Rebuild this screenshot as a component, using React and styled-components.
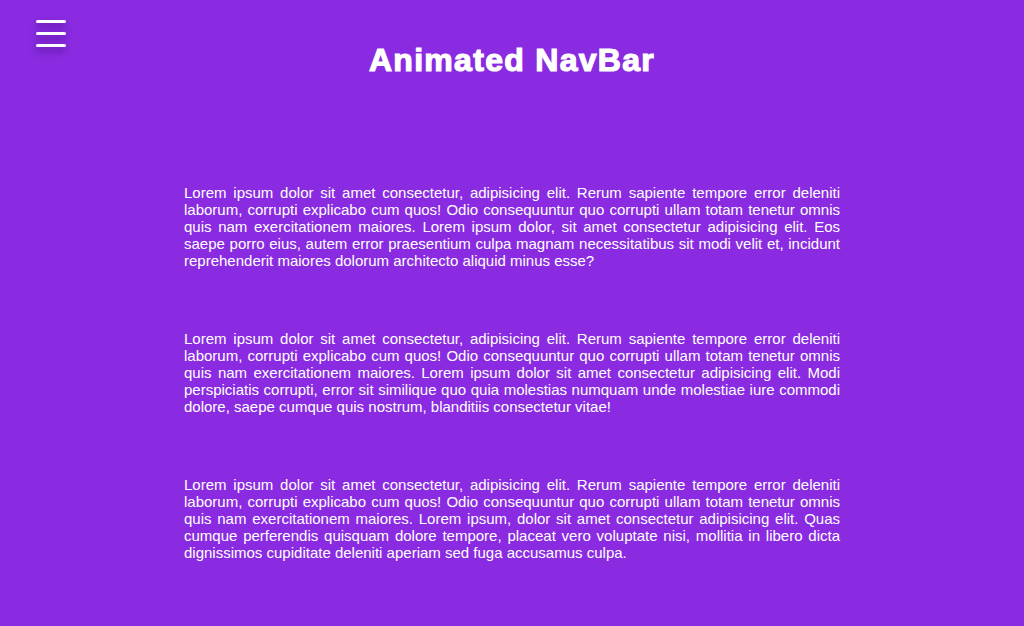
import styled, { createGlobalStyle } from "styled-components";

const GlobalStyle = createGlobalStyle`
  html, body {
    margin: 0;
    padding: 0;
    background: #8a2be2;
  }
  body {
    font-family: "Liberation Sans", Arial, sans-serif;
    color: #fff;
    min-height: 626px;
  }
`;

const Page = styled.div`
  position: relative;
  min-height: 626px;
`;

// menu toggle sits over the page, top-left
const Burger = styled.button`
  position: absolute;
  top: 20px;
  left: 36px;
  width: 30px;
  display: flex;
  flex-direction: column;
  gap: 9px;
  padding: 0;
  background: none;
  border: none;
  cursor: pointer;
`;

const Bar = styled.span`
  display: block;
  width: 30px;
  height: 3px;
  border-radius: 3px;
  background: #fff;
  box-shadow: 0 4px 7px rgba(50, 0, 100, 0.6);
`;

const Title = styled.h1`
  margin: 0;
  padding-top: 42px;
  text-align: center;
  font-size: 32px;
  font-weight: 700;
  letter-spacing: 1.3px;
  -webkit-text-stroke: 1.2px #fff;
`;

const Content = styled.main`
  width: 656px;
  margin: 0 auto;
  padding-top: 105px;
  display: flex;
  flex-direction: column;
  gap: 61px;
`;

const Para = styled.p`
  margin: 0;
  font-size: 15px;
  text-align: justify;
`;

const paragraphs = [
  "Lorem ipsum dolor sit amet consectetur, adipisicing elit. Rerum sapiente tempore error deleniti laborum, corrupti explicabo cum quos! Odio consequuntur quo corrupti ullam totam tenetur omnis quis nam exercitationem maiores. Lorem ipsum dolor, sit amet consectetur adipisicing elit. Eos saepe porro eius, autem error praesentium culpa magnam necessitatibus sit modi velit et, incidunt reprehenderit maiores dolorum architecto aliquid minus esse?",
  "Lorem ipsum dolor sit amet consectetur, adipisicing elit. Rerum sapiente tempore error deleniti laborum, corrupti explicabo cum quos! Odio consequuntur quo corrupti ullam totam tenetur omnis quis nam exercitationem maiores. Lorem ipsum dolor sit amet consectetur adipisicing elit. Modi perspiciatis corrupti, error sit similique quo quia molestias numquam unde molestiae iure commodi dolore, saepe cumque quis nostrum, blanditiis consectetur vitae!",
  "Lorem ipsum dolor sit amet consectetur, adipisicing elit. Rerum sapiente tempore error deleniti laborum, corrupti explicabo cum quos! Odio consequuntur quo corrupti ullam totam tenetur omnis quis nam exercitationem maiores. Lorem ipsum, dolor sit amet consectetur adipisicing elit. Quas cumque perferendis quisquam dolore tempore, placeat vero voluptate nisi, mollitia in libero dicta dignissimos cupiditate deleniti aperiam sed fuga accusamus culpa.",
];

export default function App() {
  return (
    <Page>
      <GlobalStyle />
      <Burger aria-label="menu">
        <Bar />
        <Bar />
        <Bar />
      </Burger>
      <Title>Animated NavBar</Title>
      <Content>
        {paragraphs.map((text, i) => (
          <Para key={i}>{text}</Para>
        ))}
      </Content>
    </Page>
  );
}
